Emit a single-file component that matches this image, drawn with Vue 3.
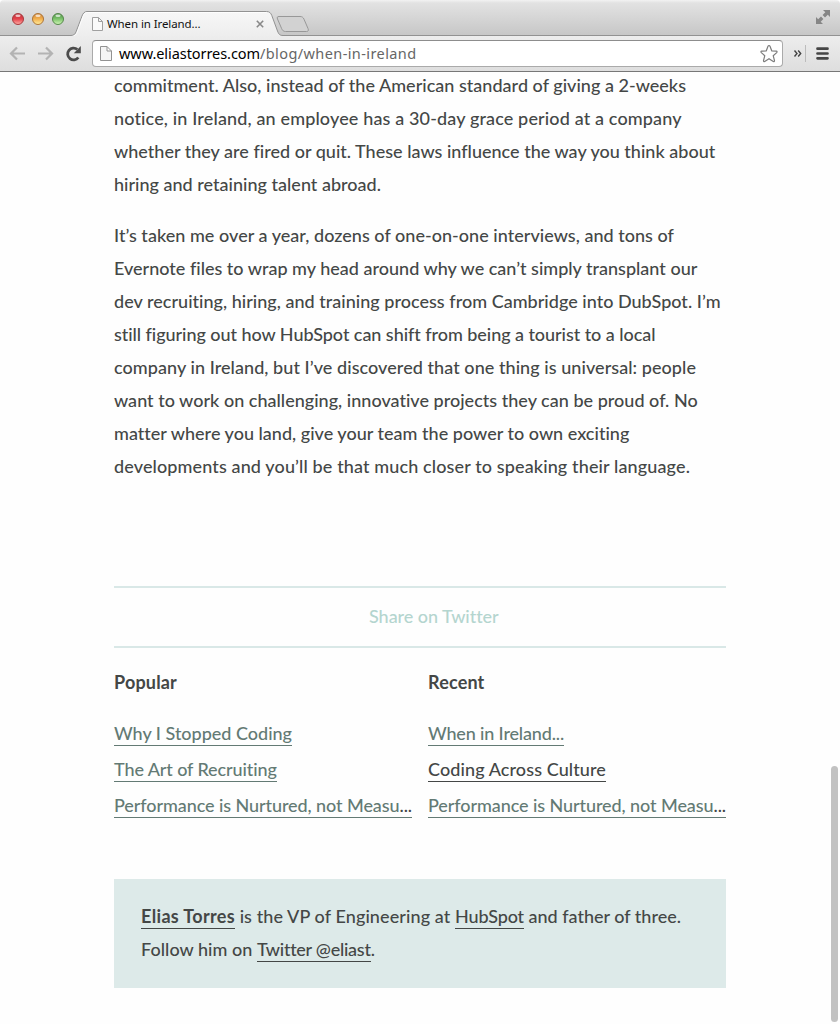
<script setup>
// Spreads a text run over a given width by adjusting its tracking.
const vFit = {
  mounted(el, { value }) {
    const n = el.textContent.length
    const w = el.getBoundingClientRect().width
    el.style.letterSpacing = (value - w) / n + 'px'
  }
}

const paragraphs = [
  [
    ['commitment. Also, instead of the American standard of giving a 2-weeks', 572],
    ['notice, in Ireland, an employee has a 30-day grace period at a company', 568],
    ['whether they are fired or quit. These laws influence the way you think about', 601],
    ['hiring and retaining talent abroad.', 267]
  ],
  [
    ['It’s taken me over a year, dozens of one-on-one interviews, and tons of', 560],
    ['Evernote files to wrap my head around why we can’t simply transplant our', 583],
    ['dev recruiting, hiring, and training process from Cambridge into DubSpot. I’m', 607],
    ['still figuring out how HubSpot can shift from being a tourist to a local', 541],
    ['company in Ireland, but I’ve discovered that one thing is universal: people', 582],
    ['want to work on challenging, innovative projects they can be proud of. No', 584],
    ['matter where you land, give your team the power to own exciting', 515],
    ['developments and you’ll be that much closer to speaking their language.', 576]
  ]
]

const columns = [
  {
    title: 'Popular',
    width: 63,
    links: [
      { text: 'Why I Stopped Coding', width: 178 },
      { text: 'The Art of Recruiting', width: 163 },
      { text: 'Performance is Nurtured, not Measu', more: '...', width: 298 }
    ]
  },
  {
    title: 'Recent',
    width: 56.500,
    links: [
      { text: 'When in Ireland...', width: 136 },
      { text: 'Coding Across Culture', width: 178, active: true },
      { text: 'Performance is Nurtured, not Measu', more: '...', width: 298 }
    ]
  }
]
</script>

<template>
  <div class="window">
    <header class="chrome">
      <div class="tabstrip">
        <svg class="tabshape" width="840" height="36" viewBox="0 0 840 36">
          <defs>
            <linearGradient id="tab" x1="0" y1="0" x2="0" y2="1">
              <stop offset="0" stop-color="#f7f7f7" />
              <stop offset="1" stop-color="#ededed" />
            </linearGradient>
            <linearGradient id="red" x1="0" y1="0" x2="0" y2="1">
              <stop offset="0" stop-color="#b8323a" /><stop offset=".5" stop-color="#e5434c" /><stop offset="1" stop-color="#ffb0a8" />
            </linearGradient>
            <linearGradient id="amber" x1="0" y1="0" x2="0" y2="1">
              <stop offset="0" stop-color="#cc8336" /><stop offset=".5" stop-color="#f3b04e" /><stop offset="1" stop-color="#fff0a0" />
            </linearGradient>
            <linearGradient id="green" x1="0" y1="0" x2="0" y2="1">
              <stop offset="0" stop-color="#4d8f45" /><stop offset=".5" stop-color="#7dc46c" /><stop offset="1" stop-color="#d3f7b8" />
            </linearGradient>
          </defs>
          <path d="M0 35.5H71C74 35.5 75.200 34 76.200 31.500L82 16C83 13.300 84.500 11.500 87 11.500H266.500C269.500 11.500 270.800 13 271.800 15.500L277.500 31C278.800 34.500 280 35.500 283 35.500H840V37H0Z" fill="url(#tab)" stroke="#929292" />
          <path d="M72 36.500C75 36 76.500 34.500 77.300 32L83 16.500C84 14 85 12.500 87.500 12.500H266.500" fill="none" stroke="#fff" stroke-opacity=".8" />
          <path d="M279 16.500H300C302 16.500 303.200 17.300 304 19.200L308 28.500C308.800 30.500 308.200 31.500 306.500 31.500H285.500C283.500 31.500 282.500 30.500 281.700 28.700L277.500 19C276.800 17.300 277.300 16.500 279 16.500Z" fill="#d2d2d2" stroke="#989898" />
          <g stroke-width="1">
            <circle cx="18" cy="19" r="5.500" fill="url(#red)" stroke="#a83a3e" />
            <circle cx="38" cy="19" r="5.500" fill="url(#amber)" stroke="#ad7438" />
            <circle cx="58" cy="19" r="5.500" fill="url(#green)" stroke="#56884c" />
          </g>
          <g fill="#fff" fill-opacity=".7">
            <ellipse cx="18" cy="15.800" rx="2.600" ry="1.300" />
            <ellipse cx="38" cy="15.800" rx="2.600" ry="1.300" />
            <ellipse cx="58" cy="15.800" rx="2.600" ry="1.300" />
          </g>
          <path d="M92.500 17.500H98.500L102.500 21.500V30.500H92.500ZM98.500 17.500V21.500H102.500" fill="#fafafa" stroke="#a0a0a0" />
          <path d="M256.800 20.800L263.200 27.200M263.200 20.800L256.800 27.200" stroke="#888" stroke-width="1.600" />
          <g fill="#868686">
            <path d="M823 10H830V17L827.800 14.800L825 17.500L822.600 15L825.300 12.300Z" />
            <path d="M816 24V17L818.200 19.200L821 16.500L823.400 19L820.700 21.700L823 24Z" />
          </g>
        </svg>
        <span class="tabtitle"><span v-fit="93.500" class="run">When in Ireland...</span></span>
      </div>
      <div class="toolbar">
        <svg class="nav" width="92" height="36" viewBox="0 0 92 36">
          <g fill="none" stroke="#b3b3b3" stroke-width="2.200">
            <path d="M25 17.500H11.500M17 11.500L11 17.500L17 23.500" />
            <path d="M38 17.500H51.500M46 11.500L52 17.500L46 23.500" />
          </g>
          <path d="M78.300 21.500A5.900 5.900 0 1 1 77.300 13.400" fill="none" stroke="#4c4c4c" stroke-width="2.800" />
          <path d="M80.800 10V17.300H73.800Z" fill="#4c4c4c" />
        </svg>
        <div class="omnibox">
          <svg width="14" height="17" viewBox="0 0 14 17">
            <path d="M1.500 1.500H8L12.500 6V15.500H1.500ZM8 1.500V6H12.500" fill="#f5f5f5" stroke="#929292" />
          </svg>
          <span class="url"><span v-fit="141" class="run host">www.eliastorres.com</span><span v-fit="156.500" class="run">/blog/when-in-ireland</span></span>
          <svg class="star" width="20" height="20" viewBox="0 0 20 20">
            <path d="M10 1.500Q10.700 1.500 11 2.200L12.800 7L17.300 7.200Q18.600 7.500 17.700 8.600L14.200 11.700L15.500 16.700Q15.500 18 14.300 17.500L10 14.700L5.700 17.500Q4.500 18 4.500 16.700L5.800 11.700L2.300 8.600Q1.400 7.500 2.700 7.200L7.200 7L9 2.200Q9.300 1.500 10 1.500Z" fill="#fff" stroke="#7c7c7c" stroke-width="1.200" stroke-linejoin="round" />
          </svg>
        </div>
        <svg class="menu" width="57" height="36" viewBox="0 0 57 36">
          <path d="M11.500 14.500L14 17.500L11.500 20.500M15.200 14.500L17.700 17.500L15.200 20.500" fill="none" stroke="#444" stroke-width="1.400" />
          <path d="M22.500 9V26" stroke="#bcbcbc" />
          <path d="M34.500 12.700H44.500M34.500 17.500H44.500M34.500 22.300H44.500" stroke="#454545" stroke-width="2.700" stroke-linecap="round" />
        </svg>
      </div>
    </header>

    <main class="page">
      <article>
        <p v-for="(lines, i) in paragraphs" :key="i">
          <span v-for="[text, width] in lines" :key="text" class="line"><span v-fit="width" class="run">{{ text }}</span></span>
        </p>
      </article>

      <div class="share"><span v-fit="129" class="run">Share on Twitter</span></div>

      <section class="lists">
        <div v-for="col in columns" :key="col.title">
          <h4><span v-fit="col.width" class="run">{{ col.title }}</span></h4>
          <ul>
            <li v-for="link in col.links" :key="link.text">
              <a v-fit="link.width" class="run link" :class="{ active: link.active }">{{ link.text }}<span v-if="link.more" class="more">{{ link.more }}</span></a>
            </li>
          </ul>
        </div>
      </section>

      <footer class="bio">
        <div><a v-fit="94" class="run link active name">Elias Torres</a><span v-fit="220" class="run">&nbsp;is the VP of Engineering at&nbsp;</span><a v-fit="69" class="run link active">HubSpot</a><span v-fit="157" class="run">&nbsp;and father of three.</span></div>
        <div><span v-fit="116" class="run">Follow him on&nbsp;</span><a v-fit="113" class="run link active">Twitter @eliast</a><span class="run">.</span></div>
      </footer>
    </main>
    <div class="scrollbar"></div>
  </div>
</template>

<style>
html, body { margin: 0; background: #fff; overflow: hidden; }
</style>

<style scoped>
.window {
  position: relative;
  width: 840px;
  height: 1024px;
  overflow: hidden;
  display: flex;
  flex-direction: column;
  background: #fefefe;
  font-family: Lato, "Open Sans", sans-serif;
}
.run { display: inline-block; white-space: pre; }
.chrome {
  position: relative;
  z-index: 1;
  flex: none;
  height: 72px;
  box-sizing: border-box;
  border-bottom: 1px solid #777;
  font-family: "Noto Sans", "Open Sans", sans-serif;
}
.tabstrip {
  position: relative;
  height: 36px;
  border-radius: 4px 4px 0 0;
  background: linear-gradient(#f2f2f2 0, #e2e2e2 3px, #c6c6c6 100%);
}
.tabshape { position: absolute; left: 0; top: 0; }
.tabtitle {
  position: relative;
  display: block;
  padding: 16px 0 0 107px;
  font-size: 11.5px;
  line-height: 16px;
  color: #111;
}
.toolbar {
  display: flex;
  height: 35px;
  background: linear-gradient(#ededed, #dedede);
}
.nav, .menu { flex: none; }
.omnibox {
  flex: 1;
  display: flex;
  align-items: center;
  height: 27px;
  margin-top: 4px;
  padding: 0 3px 0 6px;
  box-sizing: border-box;
  border: 1px solid #aaa;
  border-top-color: #8d8d8d;
  border-radius: 4px;
  background: #fff;
}
.url {
  flex: 1;
  padding: 0 0 2px 6px;
  font-size: 14.5px;
  line-height: 22px;
  color: #666;
}
.host { color: #000; }
.page {
  flex: 1;
  width: 612px;
  margin: -3px auto 0;
  font-size: 18px;
  font-weight: 500;
  line-height: 33px;
  color: #444746;
}
p { margin: 0 0 18px; }
.line { display: block; height: 33px; }
.share {
  height: 58px;
  margin-top: 103px;
  padding-left: 255px;
  border-top: 2px solid #d9e8e7;
  border-bottom: 2px solid #d9e8e7;
  line-height: 56px;
  color: #b4d5cf;
}
.lists {
  display: grid;
  grid-template-columns: 298px 298px;
  column-gap: 16px;
  padding-top: 18px;
}
h4 { margin: 0 0 16px; height: 33px; font-size: 18px; font-weight: 700; }
ul { list-style: none; margin: 0; padding: 0; }
li { height: 36px; line-height: 36px; }
.link {
  line-height: 22px;
  padding-bottom: 1px;
  border-bottom: 1px solid currentColor;
  color: #637a74;
}
.active { color: #444746; }
.more { color: #444746; }
.bio {
  height: 109px;
  box-sizing: border-box;
  margin-top: 56px;
  padding: 21px 27px;
  background: #ddeae9;
}
.bio div { height: 33px; white-space: nowrap; }
.name { font-weight: 700; }
.scrollbar {
  position: absolute;
  right: 2px;
  top: 766px;
  width: 7px;
  height: 256px;
  border-radius: 4px;
  background: #c2c2c2;
}
</style>
